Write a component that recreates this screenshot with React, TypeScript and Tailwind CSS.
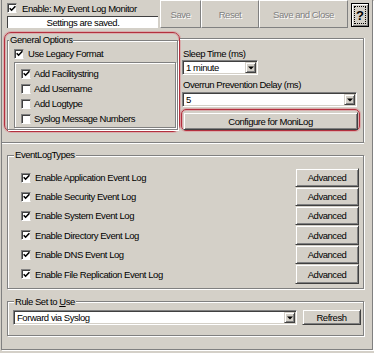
import React from "react";

const raised =
  "border border-t-[#d4d0c8] border-l-[#d4d0c8] border-b-[#404040] border-r-[#404040] shadow-[inset_1px_1px_0_#fff,inset_-1px_-1px_0_#808080] bg-[#d4d0c8]";
const sunken =
  "border border-t-[#808080] border-l-[#808080] border-b-white border-r-white shadow-[inset_1px_1px_0_#404040,inset_-1px_-1px_0_#d4d0c8] bg-white";
const etched = "border border-[#808080] shadow-[inset_1px_1px_0_#fff,1px_1px_0_#fff]";
const redRing =
  "border border-[#b3303e] shadow-[0_0_0_1px_rgba(225,130,140,0.45),inset_0_0_0_1px_rgba(225,130,140,0.45)]";

function Check({ checked }: { checked?: boolean }) {
  return (
    <span className="flex h-[10px] w-[10px] shrink-0 items-center justify-center border border-t-[#808080] border-l-[#808080] border-b-white border-r-[#d4d0c8] bg-white shadow-[inset_1px_1px_0_#404040]">
      {checked && (
        <svg width="7" height="7" viewBox="0 0 7 7">
          <path d="M0.7 3.2 L2.6 5.2 L6.4 1.2" stroke="#000" strokeWidth="1.6" fill="none" />
        </svg>
      )}
    </span>
  );
}

function Arrow() {
  return (
    <svg width="6" height="4" viewBox="0 0 6 4">
      <path d="M0 0.5H6L3 3.5Z" fill="#000" />
    </svg>
  );
}

function Combo({ value, className }: { value: string; className: string }) {
  return (
    <div className={`flex h-[15px] p-[1px] ${sunken} ${className}`}>
      <div className="flex flex-1 items-center pl-[2px]">{value}</div>
      <div className={`flex w-[11px] items-center justify-center ${raised}`}>
        <Arrow />
      </div>
    </div>
  );
}

function TopBtn({ w, children }: { w: string; children: React.ReactNode }) {
  return (
    <div
      className={`flex h-[28px] ${w} items-center justify-center border border-t-white border-l-white border-b-[#808080] border-r-[#808080] text-[#808080] [text-shadow:1px_1px_0_#fff]`}
    >
      {children}
    </div>
  );
}

const logRows = [
  { label: "Enable Application Event Log", h: "h-[19px]" },
  { label: "Enable Security Event Log", h: "h-[19px]" },
  { label: "Enable System Event Log", h: "h-[19px]" },
  { label: "Enable Directory Event Log", h: "h-[20px]" },
  { label: "Enable DNS Event Log", h: "h-[19px]" },
  { label: "Enable File Replication Event Log", h: "h-[20px]" },
];

const innerOpts = [
  { label: "Add Facilitystring", checked: true },
  { label: "Add Username", checked: false },
  { label: "Add Logtype", checked: false },
  { label: "Syslog Message Numbers", checked: false },
];

export default function App() {
  return (
    <div className="h-[353px] w-[374px] overflow-hidden bg-[#d4d0c8] font-['Liberation_Sans',Arial,sans-serif] text-[9.5px] leading-[11px] tracking-[-0.45px] text-black">
      <div className="ml-[1px] h-[350px] w-[372px] border-x border-b border-x-[#808080] border-b-[#808080] shadow-[1px_1px_0_#fff]">
        {/* top bar */}
        <div className="flex h-[29px]">
          <div className="w-[158px] pl-[5px]">
            <div className="mt-[3px] flex h-[10px] items-center gap-[5px]">
              <Check checked />
              <span>Enable: My Event Log Monitor</span>
            </div>
            <div className="mt-[3px] flex h-[12px] w-[151px] items-center justify-center border-t border-l border-[#404040] bg-white">
              Settings are saved.
            </div>
          </div>
          <TopBtn w="w-[41px]">Save</TopBtn>
          <TopBtn w="w-[58px]">Reset</TopBtn>
          <TopBtn w="w-[89px]">Save and Close</TopBtn>
          <div className="ml-[3px] mt-[3px] h-[24px] w-[18px] border border-black bg-[#d4d0c8] p-[2px] shadow-[inset_1px_1px_0_#fff,inset_-1px_-1px_0_#808080]">
            <div className="flex h-full w-full items-center justify-center border border-dotted border-black text-[13px] font-bold tracking-normal">
              ?
            </div>
          </div>
        </div>

        {/* top section */}
        <div className="flex h-[114px] w-[362px] border-b border-b-[#808080] shadow-[0_1px_0_#fff]">
          <div className={`ml-[2px] mt-[3px] h-[100px] w-[176px] rounded-[7px] ${redRing}`}>
            <div className={`relative ml-[2px] mt-[7px] h-[90px] w-[171px] ${etched}`}>
              <span className="absolute left-[1px] top-[-7px] bg-[#d4d0c8] px-[1px]">General Options</span>
              <div className="ml-[6px] mt-[7px] flex h-[11px] items-center gap-[4px]">
                <Check checked />
                <span>Use Legacy Format</span>
              </div>
              <div className={`ml-[6px] mt-[3px] h-[66px] w-[162px] pt-[3px] ${etched}`}>
                {innerOpts.map((o) => (
                  <div key={o.label} className="flex h-[15px] items-center gap-[3px] pl-[6px]">
                    <Check checked={o.checked} />
                    <span>{o.label}</span>
                  </div>
                ))}
              </div>
            </div>
          </div>

          <div className="mt-[9px] w-[184px] border-t border-r border-[#808080] pl-[1px] shadow-[inset_0_1px_0_#fff,1px_0_0_#fff]">
            <div className="ml-[2px] mt-[9px] h-[11px]">Sleep Time (ms)</div>
            <Combo value="1 minute" className="ml-[1px] mt-[1px] w-[76px]" />
            <div className="ml-[2px] mt-[4px] h-[11px]">Overrun Prevention Delay (ms)</div>
            <Combo value="5" className="ml-[1px] mt-[2px] w-[175px]" />
            <div className={`mt-[2px] h-[22px] w-[179px] rounded-[5px] ${redRing}`}>
              <div className={`ml-[1px] mt-[2px] flex h-[18px] w-[175px] items-center justify-center ${raised}`}>
                Configure for MoniLog
              </div>
            </div>
          </div>
        </div>

        {/* EventLogTypes */}
        <div className={`relative ml-[5px] mt-[12px] h-[134px] w-[357px] pt-[12px] ${etched}`}>
          <span className="absolute left-[6px] top-[-7px] bg-[#d4d0c8] px-[1px]">EventLogTypes</span>
          {logRows.map((r) => (
            <div key={r.label} className={`flex ${r.h} items-center justify-between pl-[13px] pr-[4px]`}>
              <div className="flex items-center gap-[4px]">
                <Check checked />
                <span>{r.label}</span>
              </div>
              <div className={`flex h-full w-[64px] items-center justify-center ${raised}`}>Advanced</div>
            </div>
          ))}
        </div>

        {/* Rule set */}
        <div className={`relative ml-[5px] mt-[12px] h-[35px] w-[357px] ${etched}`}>
          <span className="absolute left-[6px] top-[-6px] bg-[#d4d0c8] px-[1px]">
            Rule Set to <span className="underline">U</span>se
          </span>
          <div className="mt-[7px] flex items-start pl-[5px]">
            <Combo value="Forward via Syslog" className="mt-[1px] w-[284px]" />
            <div className={`ml-[5px] flex h-[16px] w-[59px] items-center justify-center ${raised}`}>Refresh</div>
          </div>
        </div>
      </div>
    </div>
  );
}
